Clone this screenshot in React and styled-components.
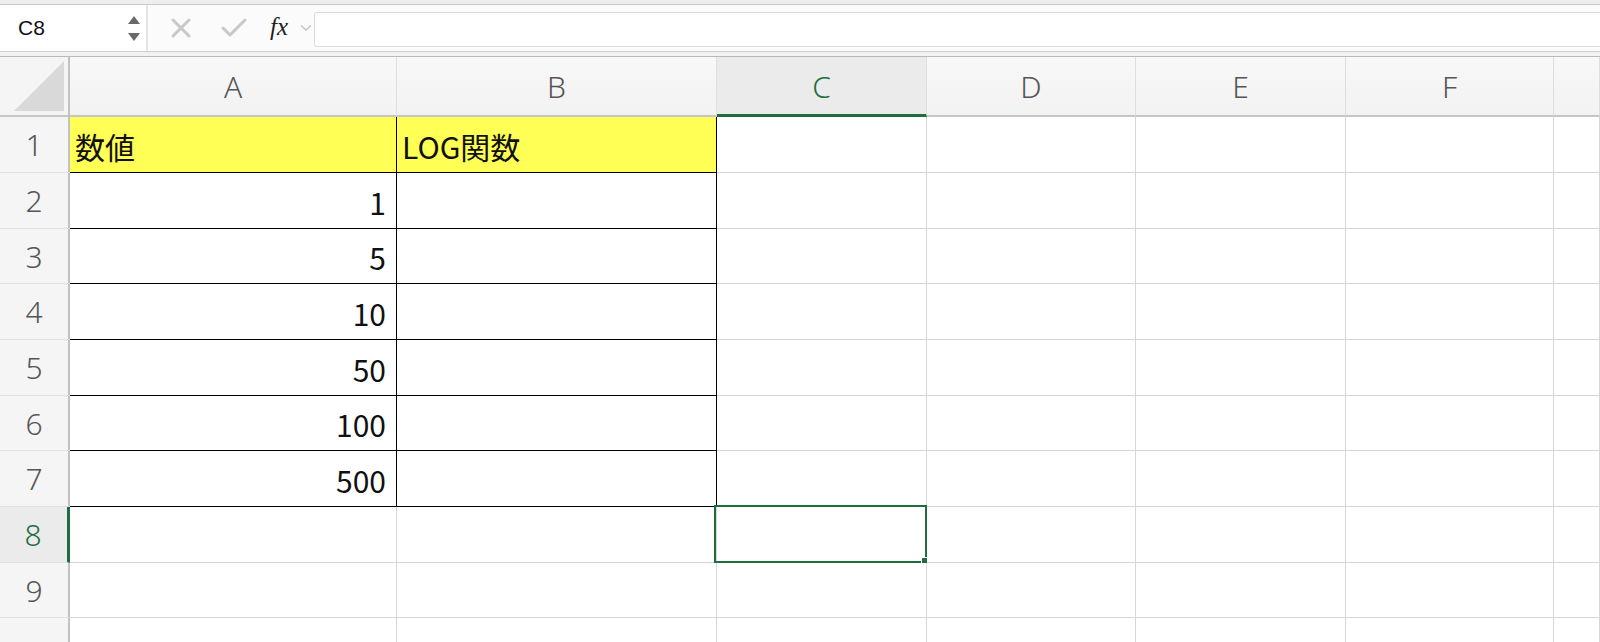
import React from "react";
import styled, { createGlobalStyle, css } from "styled-components";

const GREEN = "#1f6d3d";

const Global = createGlobalStyle`
  html, body { margin: 0; padding: 0; background: #ffffff; }
  body { font-family: "Noto Sans CJK JP", "Noto Sans", sans-serif; }
`;

const Page = styled.div`
  width: 1600px;
  height: 642px;
  overflow: hidden;
  display: flex;
  flex-direction: column;
  background: #fff;
  & > * { flex-shrink: 0; }
`;

const TopStrip = styled.div`
  height: 4px;
  background: #eeeeee;
  border-bottom: 1px solid #c9c9c9;
`;

const FormulaBar = styled.div`
  height: 46px;
  display: flex;
  align-items: stretch;
  background: #fbfbfb;
  border-bottom: 1px solid #cfcfcf;
`;

const NameBox = styled.div`
  width: 148px;
  display: flex;
  align-items: center;
  justify-content: space-between;
  background: #fff;
  border-right: 2px solid #e4e4e4;
  padding-left: 18px;
  padding-right: 4px;
  box-sizing: border-box;
  font-family: "Liberation Sans", Arial, sans-serif;
  font-size: 21px;
  color: #111;
`;

const Spinner = styled.div`
  display: flex;
  flex-direction: column;
  gap: 9px;
  padding-right: 2px;
`;

const Tri = styled.div`
  width: 0;
  height: 0;
  border-left: 6px solid transparent;
  border-right: 6px solid transparent;
  ${(p) =>
    p.$down
      ? css`border-top: 8px solid #6a6a6a;`
      : css`border-bottom: 8px solid #6a6a6a;`}
`;

const Actions = styled.div`
  display: flex;
  align-items: center;
  width: 166px;
  padding-left: 22px;
  box-sizing: border-box;
`;

const IconSlot = styled.div`
  width: ${(p) => p.$w}px;
  display: flex;
  align-items: center;
`;

const Fx = styled.span`
  font-family: "Liberation Serif", "DejaVu Serif", serif;
  font-style: italic;
  font-size: 25px;
  color: #222;
  margin-top: -2px;
`;

const InputBox = styled.div`
  flex: 1;
  margin: 7px 0 4px 0;
  background: #fff;
  border: 1px solid #dcdcdc;
  border-right: none;
  border-radius: 3px 0 0 3px;
`;

const Gap = styled.div`
  height: 4px;
  background: #f2f2f2;
  border-bottom: 1px solid #b9b9b9;
`;

const rowHeights = [56, 56, 55, 56, 56, 55, 56, 56, 55, 40];
const colWidths = [327, 320, 210, 209, 210, 208];
const colLetters = ["A", "B", "C", "D", "E", "F", ""];

const Sheet = styled.div`
  display: grid;
  grid-template-columns: 70px ${colWidths.map((w) => w + "px").join(" ")} 1fr;
  grid-template-rows: 60px ${rowHeights.map((h) => h + "px").join(" ")};
`;

const Corner = styled.div`
  background: #f5f5f5;
  border-right: 2px solid #c2c2c2;
  border-bottom: 2px solid #c6c6c6;
  box-sizing: border-box;
  display: flex;
  align-items: flex-end;
  justify-content: flex-end;
  padding: 0 4px 4px 0;
`;

const CornerTri = styled.div`
  width: 0;
  height: 0;
  border-left: 50px solid transparent;
  border-bottom: 50px solid #d9d9d9;
`;

const ColHead = styled.div`
  box-sizing: border-box;
  background: ${(p) => (p.$active ? "#ebebeb" : "linear-gradient(#f8f8f8, #f2f2f2)")};
  border-right: 1px solid #dedede;
  border-bottom: ${(p) => (p.$active ? `3px solid ${GREEN}` : "2px solid #c6c6c6")};
  display: flex;
  align-items: center;
  justify-content: center;
  font-family: "Noto Sans", "Liberation Sans", sans-serif;
  font-weight: 300;
  font-size: 30px;
  color: ${(p) => (p.$active ? GREEN : "#555")};
  padding-top: ${(p) => (p.$active ? "1px" : "0")};
`;

const RowHead = styled.div`
  box-sizing: border-box;
  background: ${(p) => (p.$active ? "#ebebeb" : "#f5f5f5")};
  border-right: ${(p) => (p.$active ? `3px solid ${GREEN}` : "2px solid #c2c2c2")};
  border-bottom: 1px solid #e0e0e0;
  display: flex;
  align-items: center;
  justify-content: center;
  font-family: "Noto Sans", "Liberation Sans", sans-serif;
  font-weight: 300;
  font-size: 30px;
  color: ${(p) => (p.$active ? GREEN : "#555")};
  padding-right: ${(p) => (p.$active ? "1px" : "0")};
`;

const Cell = styled.div`
  position: relative;
  box-sizing: border-box;
  background: ${(p) => (p.$fill ? "#ffff55" : "#fff")};
  border-right: 1px solid ${(p) => (p.$boxed ? "#000" : "#d6d6d6")};
  border-bottom: 1px solid ${(p) => (p.$boxed ? "#000" : "#d6d6d6")};
  display: flex;
  align-items: center;
  justify-content: ${(p) => (p.$num ? "flex-end" : "flex-start")};
  padding: 2px 10px 0 5px;
  font-family: "Noto Sans CJK JP", "Noto Sans", sans-serif;
  font-size: 30px;
  color: #111;
  white-space: nowrap;
`;

const Selection = styled.div`
  position: absolute;
  left: -3px;
  top: -2px;
  right: -1px;
  bottom: -1px;
  border: 2px solid ${GREEN};
  pointer-events: none;
`;

const Handle = styled.div`
  position: absolute;
  right: -5px;
  bottom: -5px;
  width: 7px;
  height: 7px;
  background: ${GREEN};
  border: 1px solid #fff;
`;

const XIcon = () => (
  <svg width="22" height="22" viewBox="0 0 22 22">
    <path d="M3 3 L19 19 M19 3 L3 19" stroke="#c8c8c8" strokeWidth="3" strokeLinecap="round" fill="none" />
  </svg>
);

const CheckIcon = () => (
  <svg width="28" height="22" viewBox="0 0 28 22">
    <path d="M3 11 L10 18 L25 3" stroke="#c8c8c8" strokeWidth="3" strokeLinecap="round" strokeLinejoin="round" fill="none" />
  </svg>
);

const Chevron = () => (
  <svg width="12" height="8" viewBox="0 0 12 8">
    <path d="M1 1.5 L6 6 L11 1.5" stroke="#c4c4c4" strokeWidth="1.5" fill="none" />
  </svg>
);

const data = {
  1: ["数値", "LOG関数"],
  2: ["1", ""],
  3: ["5", ""],
  4: ["10", ""],
  5: ["50", ""],
  6: ["100", ""],
  7: ["500", ""],
};

export default function App() {
  const rows = rowHeights.map((_, i) => i + 1);
  return (
    <Page>
      <Global />
      <TopStrip />
      <FormulaBar>
        <NameBox>
          <span>C8</span>
          <Spinner>
            <Tri />
            <Tri $down />
          </Spinner>
        </NameBox>
        <Actions>
          <IconSlot $w={50}><XIcon /></IconSlot>
          <IconSlot $w={50}><CheckIcon /></IconSlot>
          <IconSlot $w={30}><Fx>fx</Fx></IconSlot>
          <IconSlot $w={14}><Chevron /></IconSlot>
        </Actions>
        <InputBox />
      </FormulaBar>
      <Gap />
      <Sheet>
        <Corner><CornerTri /></Corner>
        {colLetters.map((l, i) => (
          <ColHead key={"h" + i} $active={l === "C"}>{l}</ColHead>
        ))}
        {rows.map((r) => (
          <React.Fragment key={r}>
            <RowHead $active={r === 8}>{r < 10 ? r : ""}</RowHead>
            {colLetters.map((l, c) => {
              const inTable = r <= 7 && c <= 1;
              const text = inTable ? data[r][c] : "";
              const isNum = inTable && r > 1 && c === 0;
              const selected = r === 8 && l === "C";
              return (
                <Cell
                  key={c}
                  $boxed={inTable}
                  $fill={r === 1 && c <= 1}
                  $num={isNum}
                >
                  {text}
                  {selected && (
                    <Selection>
                      <Handle />
                    </Selection>
                  )}
                </Cell>
              );
            })}
          </React.Fragment>
        ))}
      </Sheet>
    </Page>
  );
}
